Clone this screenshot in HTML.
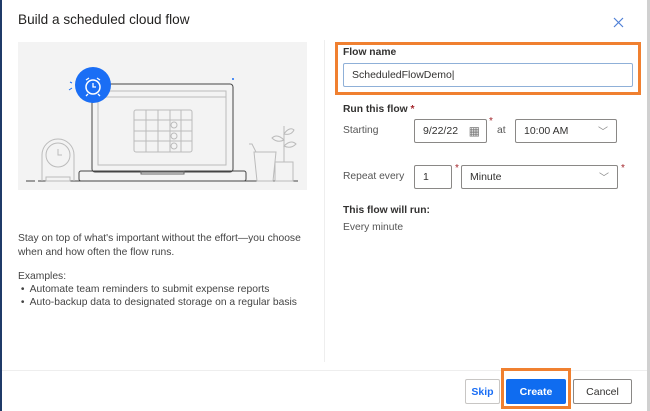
<!DOCTYPE html>
<html><head><style>
*{box-sizing:border-box;margin:0;padding:0}
body{width:650px;height:411px;background:#fff;font-family:"Liberation Sans",sans-serif;position:relative;overflow:hidden;color:#323130}
.a{position:absolute}
.t{font-size:10.3px;white-space:nowrap}
.box{position:absolute;border:1px solid #8a8886;border-radius:2px;background:#fff;font-size:10.5px;padding-left:8px;display:flex;align-items:center}
.star{position:absolute;color:#a4262c;font-size:10px}
</style></head><body>
<div class="a" style="left:0;top:0;width:2px;height:411px;background:#1f3a68"></div>
<div class="a" style="left:647px;top:0;width:3px;height:411px;background:#d0d0d0"></div>
<div class="a t" style="left:18px;top:12px;font-size:13.6px;color:#201f1e">Build a scheduled cloud flow</div>
<svg class="a" style="left:613px;top:17px" width="11" height="11" viewBox="0 0 11 11"><path d="M1 1L10 10M10 1L1 10" stroke="#4f7fd6" stroke-width="1.2"/></svg>
<div class="a" style="left:18px;top:42px;width:289px;height:148px;background:#f3f3f3">
<svg width="289" height="148" viewBox="18 42 289 148" fill="none" stroke="#444" stroke-width="1">
<line x1="26" y1="181" x2="35" y2="181"/><line x1="38" y1="181" x2="298" y2="181"/>
<rect x="92" y="84" width="141" height="88" rx="3"/>
<rect x="98" y="91" width="128" height="74" stroke="#bbb"/>
<line x1="98" y1="97" x2="226" y2="97" stroke="#bbb"/>
<rect x="79" y="171" width="167" height="10" rx="2"/>
<rect x="141" y="171" width="43" height="3" stroke="#666"/>
<g stroke="#bbb"><rect x="134" y="110" width="58" height="42" rx="2"/>
<line x1="134" y1="120" x2="192" y2="120"/><line x1="134" y1="131" x2="192" y2="131"/><line x1="134" y1="141" x2="192" y2="141"/>
<line x1="146" y1="110" x2="146" y2="152"/><line x1="158" y1="110" x2="158" y2="152"/><line x1="170" y1="110" x2="170" y2="152"/><line x1="181" y1="110" x2="181" y2="152"/>
<circle cx="174" cy="125" r="3"/><circle cx="174" cy="136" r="3"/><circle cx="174" cy="146" r="3"/>
<path d="M42 181V155a16 16 0 0 1 32 0V181"/><circle cx="58" cy="155" r="12"/><path d="M58 149v6h4"/>
<rect x="46" y="177" width="24" height="4"/>
<path d="M254 152h22l-3 29h-16z"/><path d="M256 152l-4-8h-3"/>
<rect x="275" y="162" width="18" height="19"/><path d="M284 162V126"/><path d="M284 140c-6-6-10-4-12-2 4 4 8 4 12 2zM284 146c6-6 10-4 12-2-4 4-8 4-12 2zM284 134c4-6 8-6 10-4-2 4-6 5-10 4z"/></g>
<circle cx="93" cy="85" r="18" fill="#1a6ef5" stroke="none"/>
<circle cx="93" cy="87" r="7" stroke="#fff" stroke-width="1.5"/><path d="M93 83v4h3M86 80l3-2M100 80l-3-2M88 94l-2 2M98 94l2 2" stroke="#fff" stroke-width="1.3"/>
<path d="M69 90l3-2M70 82l2 1" stroke="#1a6ef5"/><circle cx="233" cy="79" r="1" fill="#1a6ef5" stroke="none"/>
</svg></div>
<div class="a t" style="left:18px;top:232px;line-height:14px;color:#444">Stay on top of what's important without the effort—you choose<br>when and how often the flow runs.</div>
<div class="a t" style="left:18px;top:270px;line-height:13px;color:#444">Examples:<br>&nbsp;•&nbsp; Automate team reminders to submit expense reports<br>&nbsp;•&nbsp; Auto-backup data to designated storage on a regular basis</div>
<div class="a" style="left:324px;top:40px;width:1px;height:322px;background:#eee"></div>
<div class="a" style="left:2px;top:370px;width:645px;height:1px;background:#eee"></div>
<div class="a" style="left:335px;top:42px;width:306px;height:53px;border:3px solid #f08030"></div>
<div class="a t" style="left:343px;top:47px;font-weight:bold;color:#323130">Flow name</div>
<div class="box" style="left:343px;top:63px;width:290px;height:24px;border-color:#8fb0d8">ScheduledFlowDemo|</div>
<div class="a t" style="left:343px;top:104px;font-weight:bold">Run this flow <span style="color:#a4262c">*</span></div>
<div class="a t" style="left:343px;top:125px;color:#555">Starting</div>
<div class="box" style="left:414px;top:119px;width:73px;height:24px">9/22/22<span style="position:absolute;right:6px;top:4px;font-size:12px;color:#777">▦</span></div>
<div class="star" style="left:489px;top:116px">*</div>
<div class="a t" style="left:497px;top:125px;color:#555">at</div>
<div class="box" style="left:515px;top:119px;width:102px;height:24px">10:00 AM<span style="position:absolute;right:8px;top:3px;color:#888;font-size:10px">﹀</span></div>
<div class="a t" style="left:343px;top:171px;color:#555">Repeat every</div>
<div class="box" style="left:414px;top:165px;width:38px;height:24px">1</div>
<div class="star" style="left:455px;top:163px">*</div>
<div class="box" style="left:461px;top:165px;width:157px;height:24px">Minute<span style="position:absolute;right:8px;top:3px;color:#888;font-size:10px">﹀</span></div>
<div class="star" style="left:621px;top:163px">*</div>
<div class="a t" style="left:343px;top:205px;font-weight:bold">This flow will run:</div>
<div class="a t" style="left:343px;top:222px;color:#555">Every minute</div>
<div class="a" style="left:501px;top:368px;width:70px;height:41px;border:3px solid #f08030"></div>
<div class="box" style="left:465px;top:379px;width:35px;height:25px;padding:0;justify-content:center;color:#1a6ef5;font-weight:bold;border-color:#c8c6c4">Skip</div>
<div class="box" style="left:506px;top:379px;width:60px;height:25px;padding:0;justify-content:center;color:#fff;font-weight:bold;background:#0f6cf0;border-color:#0f6cf0">Create</div>
<div class="box" style="left:573px;top:379px;width:59px;height:25px;padding:0;justify-content:center;border-color:#8a8886">Cancel</div>
</body></html>
